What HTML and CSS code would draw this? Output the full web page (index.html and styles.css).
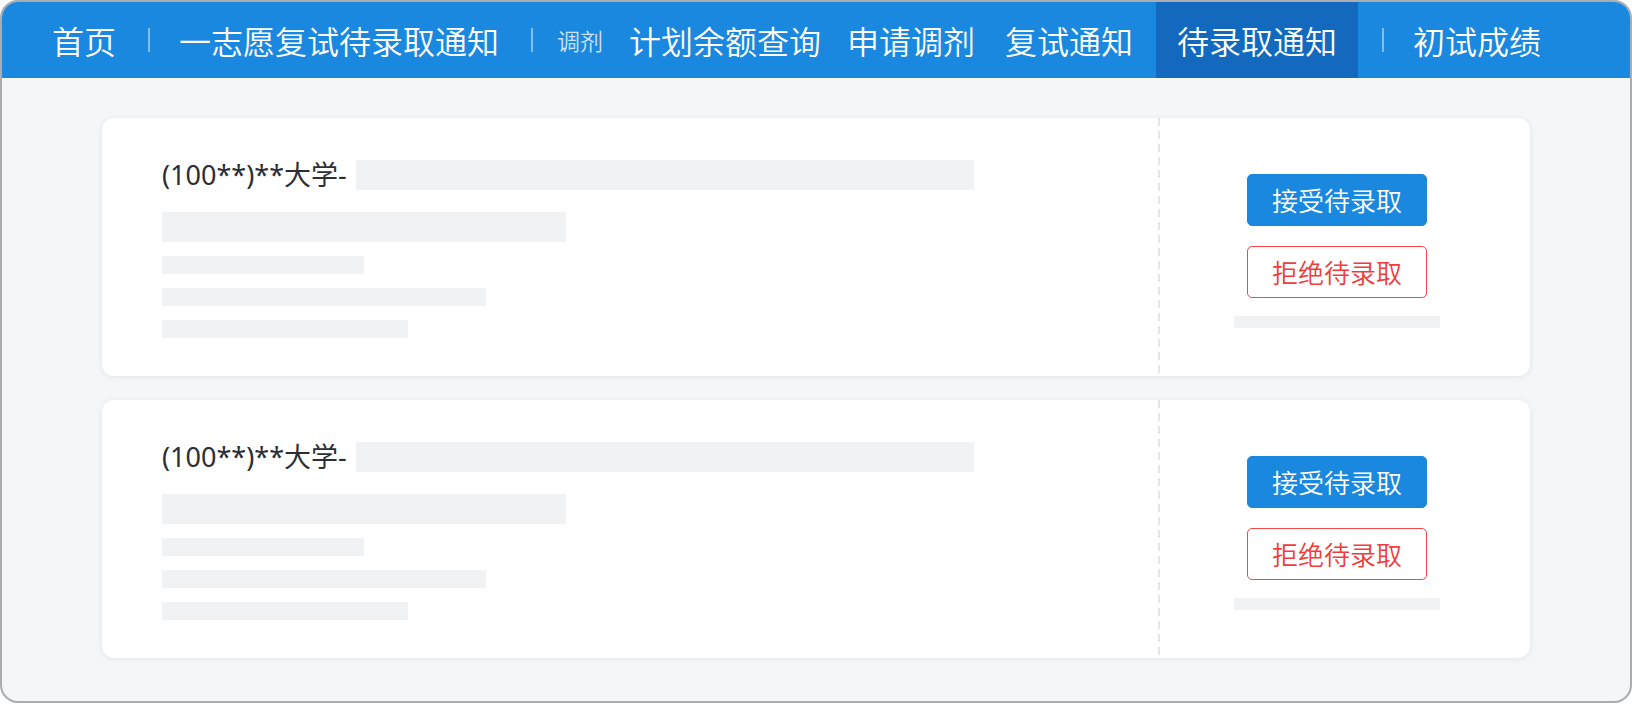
FILE: index.html
```html
<!DOCTYPE html>
<html lang="zh-CN">
<head>
<meta charset="utf-8">
<title>待录取通知</title>
<link rel="stylesheet" href="styles.css">
</head>
<body>
<div class="frame">
  <nav class="nav">
    <a class="nav-link">首页</a>
    <span class="sep"></span>
    <a class="nav-link">一志愿复试待录取通知</a>
    <span class="sep"></span>
    <span class="nav-label">调剂</span>
    <a class="nav-link">计划余额查询</a>
    <a class="nav-link">申请调剂</a>
    <a class="nav-link nav-link-wide">复试通知</a>
    <a class="nav-link active">待录取通知</a>
    <span class="sep"></span>
    <a class="nav-link">初试成绩</a>
  </nav>
  <main class="content">
    <section class="card">
      <div class="card-main">
        <div class="title-row">
          <span class="title">(100**)**大学-</span>
          <span class="sk sk-title"></span>
        </div>
        <span class="sk sk-line2"></span>
        <span class="sk sk-small sk-w202"></span>
        <span class="sk sk-small sk-w324"></span>
        <span class="sk sk-small sk-w246"></span>
      </div>
      <div class="card-side">
        <button class="btn btn-primary">接受待录取</button>
        <button class="btn btn-danger">拒绝待录取</button>
        <span class="sk sk-foot"></span>
      </div>
    </section>
    <section class="card">
      <div class="card-main">
        <div class="title-row">
          <span class="title">(100**)**大学-</span>
          <span class="sk sk-title"></span>
        </div>
        <span class="sk sk-line2"></span>
        <span class="sk sk-small sk-w202"></span>
        <span class="sk sk-small sk-w324"></span>
        <span class="sk sk-small sk-w246"></span>
      </div>
      <div class="card-side">
        <button class="btn btn-primary">接受待录取</button>
        <button class="btn btn-danger">拒绝待录取</button>
        <span class="sk sk-foot"></span>
      </div>
    </section>
  </main>
</div>
</body>
</html>
```

FILE: styles.css
```css
* { box-sizing: border-box; }
html, body { margin: 0; padding: 0; background: #ffffff; }
body {
  font-family: "Noto Sans CJK SC", "Noto Sans", sans-serif;
  font-weight: 350;
  width: 1632px;
  height: 704px;
}
.frame {
  width: 1632px;
  height: 703px;
  border: 2px solid #a9acb1;
  border-radius: 18px;
  overflow: hidden;
  background: #f5f6f8;
  display: flex;
  flex-direction: column;
}
.nav {
  height: 76px;
  flex: none;
  background: #1b88df;
  display: flex;
  align-items: center;
  padding-left: 37px;
}
.nav-link {
  font-size: 32px;
  line-height: 76px;
  color: #ffffff;
  padding: 0 13px;
  white-space: nowrap;
  cursor: pointer;
}
.nav-link-wide {
  padding-left: 17px;
}
.nav-link.active {
  background: #1269bd;
  padding: 0 21px;
  margin: 0 5px 0 10px;
}
.nav-label {
  font-size: 23px;
  color: rgba(255, 255, 255, 0.78);
  padding: 0 13px 0 8px;
  white-space: nowrap;
}
.sep {
  width: 2px;
  height: 24px;
  background: rgba(255, 255, 255, 0.45);
  margin: 0 16px 0 19px;
  flex: none;
}
.content {
  padding: 40px 100px 0;
  display: flex;
  flex-direction: column;
  gap: 24px;
}
.card {
  height: 258px;
  background: #ffffff;
  border-radius: 12px;
  box-shadow: 0 1px 6px rgba(0, 0, 0, 0.08);
  display: flex;
}
.card-main {
  width: 1056px;
  flex: none;
  padding: 42px 0 0 60px;
  display: flex;
  flex-direction: column;
  align-items: flex-start;
}
.card-side {
  flex: 1;
  background-image: repeating-linear-gradient(to bottom, #e3e5e9 0 8px, transparent 8px 13px);
  background-size: 2px 100%;
  background-repeat: no-repeat;
  background-position: left top;
  padding: 56px 16px 0 2px;
  display: flex;
  flex-direction: column;
  align-items: center;
}
.title-row {
  display: flex;
  align-items: center;
  height: 30px;
}
.title {
  font-family: "Noto Sans", "Noto Sans CJK SC", sans-serif;
  font-weight: 400;
  font-size: 27px;
  line-height: 30px;
  color: #2b2e35;
  white-space: nowrap;
}
.sk {
  display: block;
  background: #f1f2f4;
}
.sk-title { width: 618px; height: 30px; margin-left: 9px; }
.sk-line2 { width: 404px; height: 30px; margin-top: 22px; }
.sk-small { height: 18px; margin-top: 14px; }
.sk-w202 { width: 202px; }
.sk-w324 { width: 324px; }
.sk-w246 { width: 246px; }
.btn {
  width: 180px;
  height: 52px;
  border-radius: 5px;
  font-family: "Noto Sans CJK SC", "Noto Sans", sans-serif;
  font-weight: 350;
  font-size: 26px;
  line-height: 1;
  padding: 0;
  cursor: pointer;
}
.btn-primary {
  background: #1b88df;
  border: 1px solid #1b88df;
  color: #ffffff;
}
.btn-danger {
  background: #ffffff;
  border: 1.5px solid #f24848;
  color: #f03c3c;
  margin-top: 20px;
}
.sk-foot { width: 206px; height: 12px; margin-top: 18px; }
```
